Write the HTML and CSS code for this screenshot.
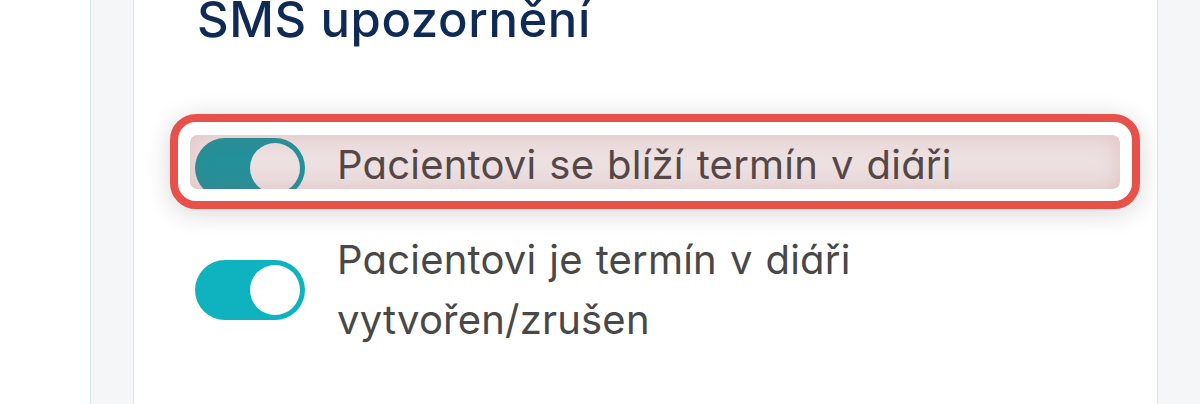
FILE: index.html
```html
<!DOCTYPE html>
<html lang="cs">
<head>
<meta charset="utf-8">
<title>SMS upozornění</title>
<link rel="stylesheet" href="styles.css">
</head>
<body>
<div class="page">
  <div class="gutter"></div>
  <div class="side side-left"></div>
  <main class="card">
    <h2 class="title">SMS upozornění</h2>
    <div class="rows">
      <div class="highlight">
        <div class="row row-hl">
          <span class="toggle"><span class="knob"></span></span>
          <span class="label">Pacientovi se blíží termín v diáři</span>
        </div>
      </div>
      <div class="row row-two">
        <span class="toggle"><span class="knob"></span></span>
        <span class="label">Pacientovi je termín v diáři<br>vytvořen/zrušen</span>
      </div>
    </div>
  </main>
  <div class="side side-right"></div>
</div>
</body>
</html>
```

FILE: styles.css
```css
html, body {
  margin: 0;
  padding: 0;
  background: #ffffff;
  overflow: hidden;
}

.page {
  display: flex;
  width: 1200px;
  height: 404px;
  font-family: Inter, "Noto Sans", sans-serif;
  font-feature-settings: "cv11" 1;
}

.gutter {
  width: 90px;
  flex: none;
  background: #ffffff;
}

.side {
  flex: none;
  background: #f4f6f8;
}

.side-left {
  width: 42px;
  border-left: 1px solid #d6e6eb;
  border-right: 1px solid #d6e6eb;
}

.side-right {
  flex: 1;
  border-left: 1px solid #d6e6eb;
}

.card {
  width: 1023px;
  flex: none;
  background: #ffffff;
  padding-left: 61px;
  box-sizing: border-box;
}

.title {
  margin: -8px 0 0 2px;
  font-size: 49px;
  line-height: 56px;
  font-weight: 500;
  color: #0e2a55;
  letter-spacing: 0.6px;
  white-space: nowrap;
}

.rows {
  margin-top: 66px;
  display: flex;
  flex-direction: column;
}

.highlight {
  width: 970px;
  margin-left: -25px;
  border: 8px solid #e8514a;
  border-radius: 26px;
  padding: 13px 12px 12px 12px;
  background: #ffffff;
  box-shadow: 0 4px 26px rgba(0, 0, 0, 0.16);
  box-sizing: border-box;
}

.row {
  display: flex;
  align-items: flex-start;
  gap: 32px;
}

.row-hl {
  position: relative;
  height: 54px;
  overflow: hidden;
  border-radius: 7px;
  padding-left: 5px;
}

.row-hl::after {
  content: "";
  position: absolute;
  inset: 0;
  border-radius: 7px;
  background: rgba(150, 70, 75, 0.17);
  box-shadow: inset 0 0 22px rgba(170, 80, 80, 0.22);
  pointer-events: none;
}

.row-hl .toggle {
  margin-top: 3px;
  background: #0ea0aa;
}

.row-two {
  margin-top: 21px;
}

.row-two .toggle {
  margin-top: 30px;
}

.toggle {
  flex: none;
  width: 110px;
  height: 60px;
  border-radius: 30px;
  background: #0fb3bf;
  display: flex;
  align-items: center;
  justify-content: flex-end;
  padding-right: 5px;
  box-sizing: border-box;
}

.knob {
  width: 50px;
  height: 50px;
  border-radius: 50%;
  background: #ffffff;
}

.label {
  font-size: 40px;
  line-height: 60px;
  color: #484848;
  font-weight: 400;
  letter-spacing: 0.2px;
  word-spacing: 1.5px;
  white-space: nowrap;
}
```
